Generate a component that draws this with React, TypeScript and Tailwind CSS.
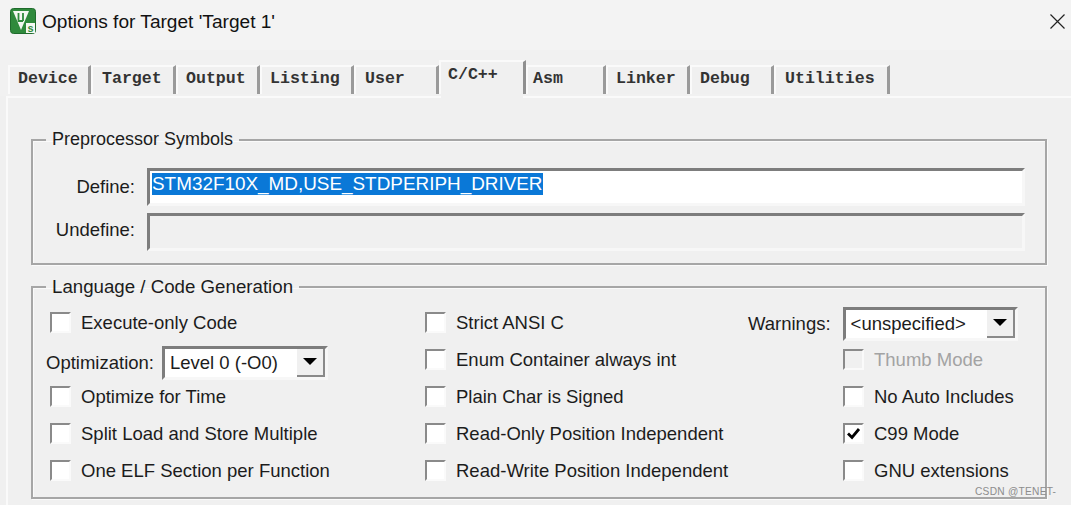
import React from 'react';

const tabs = [
  { label: 'Device', className: 'w-[83px] pl-[10px]' },
  { label: 'Target', className: 'w-[85px] pl-[11px]' },
  { label: 'Output', className: 'w-[84px] pl-[10px]' },
  { label: 'Listing', className: 'w-[94px] pl-[10px]' },
  { label: 'User', className: 'w-[85px] pl-[11px]' },
  { label: 'C/C++', className: 'w-[87px] pl-[7px]', active: true },
  { label: 'Asm', className: 'w-[80px] pl-[7px]' },
  { label: 'Linker', className: 'w-[84px] pl-[10px]' },
  { label: 'Debug', className: 'w-[84px] pl-[10px]' },
  { label: 'Utilities', className: 'w-[116px] pl-[11px]' },
];

const KeilIcon = () => (
  <svg width="26" height="26" viewBox="0 0 26 26" className="-mt-[3px] shrink-0">
    <rect x="0.5" y="0.5" width="25" height="25" rx="3" fill="#2f8a3c" stroke="#1f6b2c" />
    <path d="M3 3 H19 L11 22 Z" fill="#f4f8f2" />
    <path d="M8.5 5 V13 H13 M13 5 V13" stroke="#2f8a3c" strokeWidth="1.8" fill="none" />
    <rect x="16" y="15" width="9" height="10" fill="#f4f8f2" />
    <text x="17.5" y="24" fontSize="11" fontWeight="700" fontFamily="Liberation Sans, sans-serif" fill="#2f8a3c">s</text>
  </svg>
);

const Checkbox = ({ checked, disabled }: { checked?: boolean; disabled?: boolean }) => (
  <span
    className={`flex h-[21px] w-[21px] shrink-0 items-center justify-center border-2 border-t-[#8a8a8a] border-l-[#8a8a8a] border-r-[#fafafa] border-b-[#fafafa] ${
      disabled ? 'bg-[#f0f0f0]' : 'bg-white'
    }`}
  >
    {checked && (
      <svg width="15" height="13" viewBox="0 0 15 13">
        <path d="M2 6.5 L6 10.5 L13 2" stroke="#000" strokeWidth="2.8" fill="none" />
      </svg>
    )}
  </span>
);

const Option = ({ label, checked, disabled }: { label: string; checked?: boolean; disabled?: boolean }) => (
  <div className="flex h-[37px] items-center gap-[10px]">
    <Checkbox checked={checked} disabled={disabled} />
    <span className={disabled ? 'text-[#a3a3a3]' : 'text-[#1c1c1c]'}>{label}</span>
  </div>
);

const Dropdown = ({ value, width }: { value: string; width: string }) => (
  <div className={`flex h-[34px] ${width} items-stretch border-[3px] border-t-[#7d7d7d] border-l-[#7d7d7d] border-r-[#f7f7f7] border-b-[#f7f7f7] bg-white`}>
    <span className="flex flex-1 items-center pl-[5px] text-[#1c1c1c]">{value}</span>
    <span className="flex w-[28px] items-center justify-center border-r-2 border-b-2 border-r-[#8a8a8a] border-b-[#8a8a8a] bg-[#f0f0f0]">
      <svg width="14" height="7" viewBox="0 0 14 7">
        <path d="M0 0 H14 L7 7 Z" fill="#000" />
      </svg>
    </span>
  </div>
);

const Field = ({ label, selected, labelClass }: { label: string; selected?: boolean; labelClass?: string }) => (
  <div className="flex items-center">
    <span className={`w-[102px] text-right text-[#1c1c1c] ${labelClass ?? ''}`}>{label}</span>
    <div
      className={`ml-[12px] flex h-[38px] w-[878px] items-start border-[3px] border-t-[#7d7d7d] border-l-[#7d7d7d] border-r-[#f7f7f7] border-b-[#f7f7f7] pt-[2px] pl-[2px] ${
        selected ? 'bg-white' : 'bg-[#f0f0f0]'
      }`}
    >
      {selected && (
        <span className="bg-[#0a78d7] text-[18.9px] leading-[22px] text-white">STM32F10X_MD,USE_STDPERIPH_DRIVER</span>
      )}
    </div>
  </div>
);

const Group = ({
  title,
  height,
  titleClass,
  children,
}: {
  title: string;
  height: string;
  titleClass?: string;
  children: React.ReactNode;
}) => (
  <fieldset className={`ml-[31px] mr-[24px] ${height} border-2 border-[#a6a6a6] shadow-[inset_1px_1px_0_#fafafa,1px_1px_0_#fafafa]`}>
    <legend className={`ml-[13px] px-[6px] text-[#1c1c1c] ${titleClass ?? ''}`}>{title}</legend>
    {children}
  </fieldset>
);

export default function App() {
  return (
    <div className="relative flex h-[505px] w-[1071px] flex-col overflow-hidden bg-[#f0f0f0] font-['Liberation_Sans',sans-serif] text-[18.5px]">
      <div className="flex h-[50px] items-center bg-[#f3f3f3] pb-[5px] pl-[10px] pr-[6px]">
        <KeilIcon />
        <span className="ml-[6px] text-[19.1px] text-[#111]">Options for Target 'Target 1'</span>
        <svg width="15" height="15" viewBox="0 0 15 15" className="-mt-[3px] ml-auto">
          <path d="M0.5 0.5 L14.5 14.5 M14.5 0.5 L0.5 14.5" stroke="#222" strokeWidth="1.2" />
        </svg>
      </div>

      <div className="flex h-[46px] items-end bg-[#f1f1f1] pl-[8px] font-['Liberation_Mono',monospace] text-[16.6px] font-bold text-[#333]">
        {tabs.map((tab) => (
          <div
            key={tab.label}
            className={`mb-[2px] flex items-center ${tab.className} border-r-[3px] border-t-2 bg-[#f0f0f0] ${
              tab.active
                ? "relative z-10 h-[34px] border-l-2 border-l-[#fafafa] border-t-[#fafafa] border-r-[#8f8f8f] pb-[6px] after:absolute after:-bottom-[4px] after:left-0 after:right-0 after:h-[4px] after:bg-[#f0f0f0] after:content-['']"
                : 'h-[29px] border-t-[#fafafa] border-r-[#9a9a9a] pb-[3px] shadow-[inset_2px_0_0_#fafafa]'
            }`}
          >
            {tab.label}
          </div>
        ))}
      </div>

      <div className="ml-[6px] flex-1 border-l-2 border-t-2 border-[#fafafa] pt-[28px]">
        <div className="-ml-[8px] flex flex-col gap-[8px]">
          <Group title="Preprocessor Symbols" titleClass="text-[18px]" height="h-[139px]">
            <div className="flex flex-col gap-[7px] pt-[15px]">
              <Field label="Define:" selected />
              <Field label="Undefine:" labelClass="pb-[4px]" />
            </div>
          </Group>

          <Group title="Language / Code Generation" titleClass="text-[18.7px]" height="h-[226px]">
            <div className="grid grid-cols-[375px_418px_1fr] pl-[17px] pt-[3px]">
              <div className="flex flex-col">
                <Option label="Execute-only Code" />
                <div className="-ml-[4px] flex h-[37px] items-center gap-[8px] pt-[6px]">
                  <span className="text-[#1c1c1c]">Optimization:</span>
                  <Dropdown value="Level 0 (-O0)" width="w-[166px]" />
                </div>
                <Option label="Optimize for Time" />
                <Option label="Split Load and Store Multiple" />
                <Option label="One ELF Section per Function" />
              </div>
              <div className="flex flex-col">
                <Option label="Strict ANSI C" />
                <Option label="Enum Container always int" />
                <Option label="Plain Char is Signed" />
                <Option label="Read-Only Position Independent" />
                <Option label="Read-Write Position Independent" />
              </div>
              <div className="flex flex-col">
                <div className="-ml-[95px] flex h-[37px] items-center gap-[12px] pt-[2px]">
                  <span className="text-[#1c1c1c]">Warnings:</span>
                  <Dropdown value="<unspecified>" width="w-[175px]" />
                </div>
                <Option label="Thumb Mode" disabled />
                <Option label="No Auto Includes" />
                <Option label="C99 Mode" checked />
                <Option label="GNU extensions" />
              </div>
            </div>
          </Group>
        </div>
      </div>

      <span className="absolute left-[975px] top-[484px] text-[10.2px] tracking-[0.25px] text-[#8d8d8d]">CSDN @TENET-</span>
    </div>
  );
}
